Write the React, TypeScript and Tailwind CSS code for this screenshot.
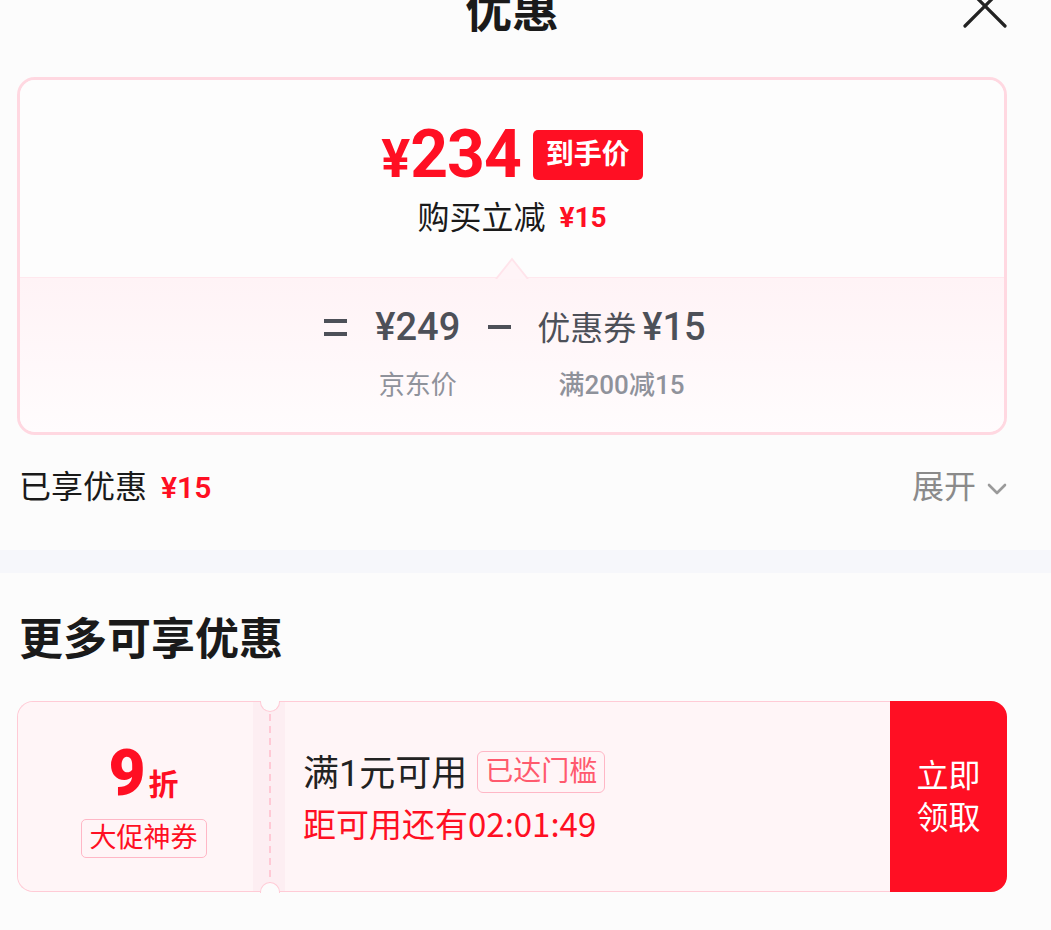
import React from 'react';

const RED = 'text-[#ff0f23]';

const CloseIcon = () => (
  <svg width="44" height="44" viewBox="0 0 44 44" className="absolute right-[44px] top-[-16px]">
    <path d="M2 2 L42 42 M42 2 L2 42" stroke="#222" strokeWidth="3.2" strokeLinecap="round" />
  </svg>
);

const Chevron = () => (
  <svg width="22" height="14" viewBox="0 0 22 14" className="ml-[10px] mt-[4px]">
    <path d="M3 3 L11 11 L19 3" stroke="#9a9a9a" strokeWidth="2.6" fill="none" strokeLinecap="round" strokeLinejoin="round" />
  </svg>
);

const App: React.FC = () => {
  return (
    <div className="w-[1051px] h-[930px] overflow-hidden bg-[#fcfcfc] font-['Roboto','Noto_Sans_CJK_SC',sans-serif] text-[#1a1a1a]">
      {/* Header */}
      <div className="relative flex flex-col h-[77px] pr-[27px]">
        <h1 className="-mt-[12px] text-center text-[47px] leading-[46px] font-bold text-[#1a1a1a]">优惠</h1>
        <CloseIcon />
      </div>

      {/* Price breakdown card */}
      <div className="ml-[17px] mr-[44px] border-[3px] border-[#ffd8e1] rounded-[18px] overflow-hidden">
        <div className="h-[197px] bg-[#fdfdfd] flex flex-col items-center pt-[43px]">
          <div className="flex items-center h-[64px]">
            <span className={`${RED} font-bold leading-none`}>
              <span className="text-[54px]">¥</span>
              <span className="text-[66px] tracking-[-1px]">234</span>
            </span>
            <span className="ml-[12px] h-[50px] px-[13px] rounded-[5px] bg-[#ff0f23] text-white text-[28px] font-bold flex items-center">到手价</span>
          </div>
          <div className="mt-[13px] flex items-center leading-[36px]">
            <span className="text-[32px]">购买立减</span>
            <span className={`${RED} ml-[14px] text-[28px] font-bold`}>¥15</span>
          </div>
        </div>
        <div className="relative h-[155px] border-t border-[#ffe8ee] bg-gradient-to-b from-[#fff3f6] to-[#fffcfd]">
          <svg width="34" height="22" viewBox="0 0 34 22" className="absolute left-1/2 -translate-x-1/2 top-[-21px]">
            <path d="M1 22 L17 2 L33 22" fill="#fff4f7" stroke="#ffe4eb" strokeWidth="2" />
          </svg>
          <div className="flex justify-center items-start gap-[28px] pt-[27px] pl-[6px] text-[#4d5058]">
            <div className="h-[44px] flex flex-col justify-center gap-[9px] w-[23px]">
              <div className="h-[4px] bg-[#4d5058]" />
              <div className="h-[4px] bg-[#4d5058]" />
            </div>
            <div className="flex flex-col items-center">
              <div className="h-[44px] flex items-center text-[38px] leading-none font-medium">¥249</div>
              <div className="mt-[21px] h-[30px] flex items-center text-[26px] leading-none text-[#8f929b]">京东价</div>
            </div>
            <div className="h-[44px] flex items-center w-[23px]">
              <div className="h-[4px] w-full bg-[#4d5058]" />
            </div>
            <div className="flex flex-col items-center -ml-[2px]">
              <div className="h-[44px] flex items-baseline leading-[44px] font-medium">
                <span className="text-[33px] font-normal">优惠券</span>
                <span className="text-[38px] ml-[6px]">¥15</span>
              </div>
              <div className="mt-[21px] h-[30px] flex items-center text-[26px] leading-none text-[#8f929b] font-medium">满200减15</div>
            </div>
          </div>
        </div>
      </div>

      {/* Enjoyed discount row */}
      <div className="mt-[32px] pl-[19px] pr-[43px] h-[40px] flex items-center justify-between">
        <div className="flex items-center">
          <span className="text-[32px]">已享优惠</span>
          <span className={`${RED} ml-[14px] text-[30px] font-semibold`}>¥15</span>
        </div>
        <div className="flex items-center text-[32px] text-[#8a8a8a]">
          展开
          <Chevron />
        </div>
      </div>

      <div className="mt-[43px] h-[23px] bg-[#f6f7fb]" />

      {/* More discounts */}
      <h2 className="mt-[43px] px-[19px] text-[44px] leading-[48px] font-bold">更多可享优惠</h2>

      <div className="mt-[37px] ml-[17px] mr-[44px] h-[191px] flex">
        <div className="relative flex-1 flex border-[1.5px] border-r-0 border-[#ffcbd6] rounded-l-[16px] bg-[#fff5f7]">
          {/* stub */}
          <div className="w-[251px] flex flex-col items-center pt-[44px] rounded-l-[16px] bg-[linear-gradient(to_right,#fff5f7_0,#fff5f7_235px,#fdeef2_235px)]">
            <div className={`${RED} flex items-end font-bold`}>
              <span className="text-[64px] leading-[56px] font-black">9</span>
              <span className="ml-[3px] text-[30px] leading-[34px]">折</span>
            </div>
            <div className={`${RED} mt-[17px] h-[39px] px-[8px] flex items-center border-[1.5px] border-[#ffb7c6] rounded-[5px] text-[27px]`}>大促神券</div>
          </div>
          <div className="w-[2px] bg-[#fdeef2] bg-[repeating-linear-gradient(to_bottom,#ffc9d5_0,#ffc9d5_7px,#fdeef2_7px,#fdeef2_12px)]" />
          {/* content */}
          <div className="flex-1 pl-[32px] pt-[49px] bg-[linear-gradient(to_right,#fdeef2_0,#fdeef2_14px,#fff5f7_14px)]">
            <div className="flex items-center h-[42px]">
              <span className="text-[36px] text-[#222] mt-[4px]">满1元可用</span>
              <span className="ml-[10px] h-[42px] px-[7px] flex items-center border-[1.5px] border-[#ffb7c6] rounded-[6px] text-[28px] text-[#ff5a6e]">已达门槛</span>
            </div>
            <div className={`${RED} mt-[10px] text-[33px] leading-[40px] font-['Noto_Sans_CJK_SC',sans-serif]`}>距可用还有02:01:49</div>
          </div>
          {/* notches */}
          <div className="absolute left-[242px] top-[-1.5px] w-[20px] h-[11px] rounded-b-full bg-[#fcfcfc] border-[1.5px] border-t-0 border-[#ffcbd6]" />
          <div className="absolute left-[242px] bottom-[-1.5px] w-[20px] h-[11px] rounded-t-full bg-[#fcfcfc] border-[1.5px] border-b-0 border-[#ffcbd6]" />
        </div>
        <div className="w-[117px] rounded-r-[16px] bg-[#ff0f23] flex items-center justify-center text-white text-[32px] leading-[42px] text-center">
          立即<br />领取
        </div>
      </div>
    </div>
  );
};

export default App;
